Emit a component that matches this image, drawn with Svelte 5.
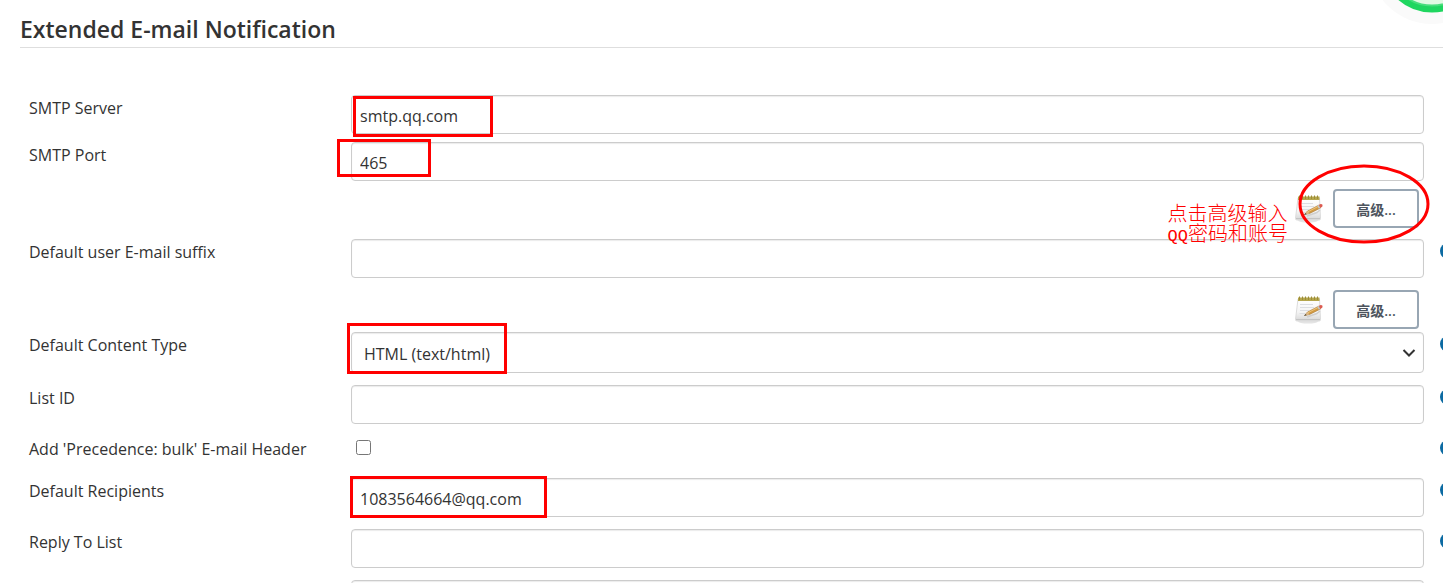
<script>
  let server = $state('smtp.qq.com');
  let port = $state('465');
  let suffix = $state('');
  let contentType = $state('html');
  let listId = $state('');
  let bulk = $state(false);
  let recipients = $state('1083564664@qq.com');
  let replyTo = $state('');
  let extra = $state('');
</script>

{#snippet help(topic)}
  <button type="button" class="help" aria-label="Help for {topic}">
    <svg viewBox="0 0 16 16" width="16" height="16" aria-hidden="true">
      <circle cx="8" cy="8" r="8" fill="#0b6aa2" />
      <path d="M5.800 6.200a2.200 2.200 0 1 1 3.300 1.900c-.8.5-1.100.8-1.100 1.600M8 11.300v1.200" fill="none" stroke="#fff" stroke-width="1.500" />
    </svg>
  </button>
{/snippet}

{#snippet notepad()}
  <svg class="notepad" viewBox="0 0 30 30" width="30" height="30" aria-hidden="true">
    <defs>
      <linearGradient id="paper" x1="0" y1="0" x2="0" y2="1">
        <stop offset="0" stop-color="#ffffff" />
        <stop offset="0.6" stop-color="#f4f4f4" />
        <stop offset="1" stop-color="#d6d6d6" />
      </linearGradient>
    </defs>
    <ellipse cx="14" cy="26.500" rx="10" ry="2" fill="#e4e4e4" />
    <path d="M4 4H25.500L26.500 24.500Q26.500 26 25 26H3Q1.500 26 1.500 24.500Z" fill="url(#paper)" stroke="#dcdcdc" stroke-width="1" />
    <path d="M2 24.500H26" stroke="#c4c4c4" stroke-width="1" />
    <path d="M4 2.500H25.500V6H4Z" fill="#b5a64c" />
    <path d="M5.500 1.500V5M8.500 1.500V5M11.500 1.500V5M14.500 1.500V5M17.500 1.500V5M20.500 1.500V5M23.500 1.500V5" stroke="#9c8d38" stroke-width="1" />
    <path d="M6 9.500H19M6 12.500H20M6 15.500H15M5.500 18.500H11" stroke="#dcdee2" stroke-width="1" />
    <path d="M13 22L23 18.500L26 16" fill="none" stroke="#cfcfcf" stroke-width="1.500" />
    <path d="M10.500 20.500L13.500 17L25 11L26.500 14L15.500 19.500Z" fill="#d29a42" stroke="#a97a38" stroke-width="0.600" />
    <path d="M14 17.700L25 12" stroke="#efc67c" stroke-width="1" />
    <path d="M10.500 20.500L13.500 17L15.500 19.500Z" fill="#dcb988" />
    <path d="M10 20.800L11.800 19L12.600 20.200Z" fill="#444" />
    <path d="M24 11.400L25.500 14.400" stroke="#c3c6ca" stroke-width="1.500" />
    <path d="M25 10.800Q27 9.300 28.500 10.800Q29.300 12.500 26.500 14Z" fill="#dc5a50" />
  </svg>
{/snippet}

<main>
  <svg class="meter" viewBox="0 0 160 160" width="160" height="160" aria-hidden="true">
    <circle cx="80" cy="80" r="63" fill="#fafafa" />
    <circle cx="80" cy="80" r="46" fill="#e0f9e2" />
    <circle cx="80" cy="80" r="46" fill="none" stroke="#48de7c" stroke-width="5" />
    <circle cx="80" cy="80" r="48.500" fill="none" stroke="#1fd65f" stroke-width="6" />
  </svg>

  <h1>Extended E-mail Notification</h1>

  <form>
    <div class="row tight">
      <label for="server">SMTP Server</label>
      <div class="field">
        <input id="server" type="text" bind:value={server} />
        <span class="mark mark-server"></span>
      </div>
    </div>

    <div class="row tight">
      <label for="port">SMTP Port</label>
      <div class="field">
        <input id="port" type="text" bind:value={port} />
        <span class="mark mark-port"></span>
      </div>
    </div>

    <div class="advanced">
      {@render notepad()}
      <button type="button" class="more">高级...</button>
      <p class="note">点击高级输入<br /><span>QQ</span>密码和账号</p>
      <svg class="ring" viewBox="0 0 132 80" width="132" height="80" aria-hidden="true">
        <ellipse cx="66" cy="40" rx="64" ry="38" fill="none" stroke="#f00" stroke-width="3" />
      </svg>
    </div>

    <div class="row">
      <label for="suffix">Default user E-mail suffix</label>
      <div class="field"><input id="suffix" type="text" bind:value={suffix} /></div>
      {@render help('Default user E-mail suffix')}
    </div>

    <div class="advanced close">
      {@render notepad()}
      <button type="button" class="more">高级...</button>
    </div>

    <div class="row">
      <label for="type">Default Content Type</label>
      <div class="field">
        <select id="type" bind:value={contentType}>
          <option value="html">HTML (text/html)</option>
        </select>
        <svg class="chevron" viewBox="0 0 14 10" width="14" height="10" aria-hidden="true">
          <path d="M1.500 2L7 7.500L12.500 2" fill="none" stroke="#333" stroke-width="2" />
        </svg>
        <span class="mark mark-type"></span>
      </div>
      {@render help('Default Content Type')}
    </div>

    <div class="row">
      <label for="list">List ID</label>
      <div class="field"><input id="list" type="text" bind:value={listId} /></div>
      {@render help('List ID')}
    </div>

    <div class="row">
      <label for="bulk">Add 'Precedence: bulk' E-mail Header</label>
      <div class="field check"><input id="bulk" type="checkbox" bind:checked={bulk} /></div>
      {@render help('Precedence: bulk')}
    </div>

    <div class="row">
      <label for="recipients">Default Recipients</label>
      <div class="field">
        <input id="recipients" type="text" bind:value={recipients} />
        <span class="mark mark-recipients"></span>
      </div>
      {@render help('Default Recipients')}
    </div>

    <div class="row">
      <label for="reply">Reply To List</label>
      <div class="field"><input id="reply" type="text" bind:value={replyTo} /></div>
      {@render help('Reply To List')}
    </div>

    <div class="row">
      <label for="extra"></label>
      <div class="field"><input id="extra" type="text" aria-label="More" bind:value={extra} /></div>
    </div>
  </form>
</main>

<style>
  :global(body) {
    margin: 0;
    background: #fff;
  }

  main {
    position: relative;
    box-sizing: border-box;
    height: 100vh;
    padding: 12px 0 0 20px;
    overflow: hidden;
    color: #333;
    font-family: "Segoe UI", "Open Sans", "Noto Sans", "Noto Sans CJK SC", sans-serif;
    font-size: 16px;
  }

  .meter {
    position: absolute;
    top: -119px;
    right: -69px;
  }

  h1 {
    position: relative;
    margin: 0 0 47px;
    border-bottom: 1px solid #dedede;
    font-size: 23px;
    font-weight: 600;
    line-height: 35px;
  }

  .row {
    display: grid;
    grid-template-columns: 322px minmax(0, 1fr) 19px;
    align-items: start;
    margin: 0 0 12px 9px;
  }

  .tight {
    margin-bottom: 8px;
  }

  label {
    line-height: 26px;
  }

  .field {
    position: relative;
    display: flex;
  }

  input[type='text'],
  select {
    box-sizing: border-box;
    width: 100%;
    height: 39px;
    padding: 3px 8px 0;
    border: 1px solid #ccc;
    border-radius: 4px;
    background: #fff;
    box-shadow: inset 0 1px 1px rgba(0, 0, 0, 0.08);
    color: #333;
    font: inherit;
  }

  select {
    height: 41px;
    padding: 3px 12px 0;
    appearance: none;
  }

  .chevron {
    position: absolute;
    top: 16px;
    right: 8px;
    pointer-events: none;
  }

  .check {
    height: 30px;
  }

  .check input {
    width: 15px;
    height: 15px;
    margin: 4px 0 0 5px;
  }

  .help {
    width: 16px;
    height: 16px;
    margin: 4px 0 0 16px;
    padding: 0;
    border: 0;
    background: none;
  }

  .help svg {
    display: block;
  }

  .advanced {
    position: relative;
    display: flex;
    justify-content: flex-end;
    align-items: center;
    gap: 9px;
    margin: 0 24px 11px 0;
  }

  .close {
    margin-bottom: 3px;
  }

  .more {
    box-sizing: border-box;
    width: 86px;
    height: 39px;
    padding: 0;
    border: 2px solid #98a6b3;
    border-radius: 4px;
    background: #fff;
    color: #4d545d;
    font-family: "Segoe UI", "Open Sans", "Noto Sans CJK SC", sans-serif;
    font-size: 14px;
    font-weight: 600;
  }

  .mark {
    position: absolute;
    box-sizing: border-box;
    border: 3px solid #f00;
    pointer-events: none;
  }

  .mark-server {
    top: 1px;
    left: 2px;
    width: 140px;
    height: 41px;
  }

  .mark-port {
    top: -3px;
    left: -14px;
    width: 94px;
    height: 38px;
  }

  .mark-type {
    top: -9px;
    left: -4px;
    width: 160px;
    height: 51px;
  }

  .mark-recipients {
    top: -2px;
    left: -1px;
    width: 197px;
    height: 42px;
  }

  .note {
    position: absolute;
    top: 14px;
    right: 131px;
    margin: 0;
    color: #f00;
    font-family: "SimSun", "Noto Sans CJK SC", sans-serif;
    font-size: 20px;
    font-weight: 300;
    line-height: 20px;
    white-space: nowrap;
    z-index: 1;
  }

  .note span {
    font-family: "Liberation Mono", monospace;
    font-size: 17px;
  }

  .ring {
    position: absolute;
    top: -25px;
    right: -11px;
    pointer-events: none;
    z-index: 1;
  }
</style>
